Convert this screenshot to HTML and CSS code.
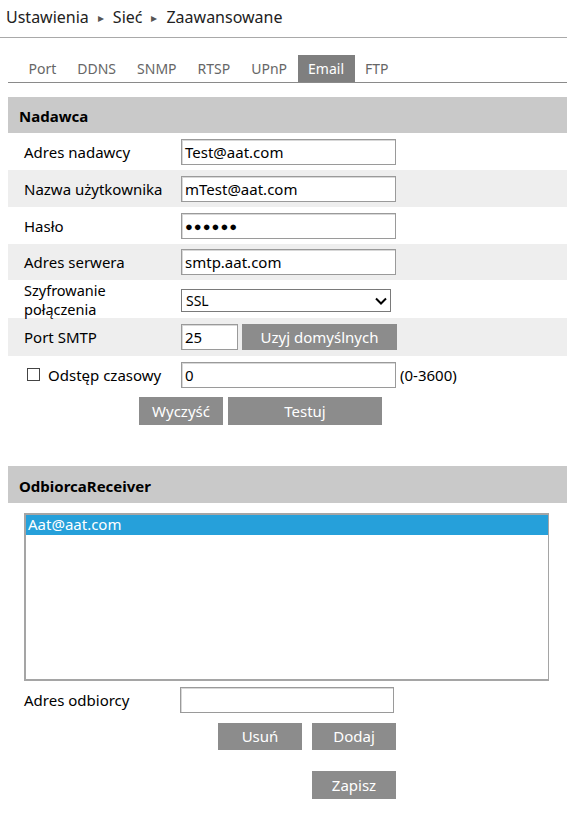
FILE: index.html
```html
<!DOCTYPE html>
<html lang="pl">
<head>
<meta charset="utf-8">
<title>Email</title>
<link rel="stylesheet" href="styles.css">
</head>
<body>
<div class="crumb">Ustawienia<span class="arr">&#9656;</span>Sieć<span class="arr">&#9656;</span>Zaawansowane</div>
<div class="tabs">
  <span class="tab">Port</span>
  <span class="tab">DDNS</span>
  <span class="tab">SNMP</span>
  <span class="tab">RTSP</span>
  <span class="tab">UPnP</span>
  <span class="tab active">Email</span>
  <span class="tab">FTP</span>
</div>

<div class="sec-head">Nadawca</div>
<div class="rows">
  <div class="row h37"><div class="lbl">Adres nadawcy</div><div class="field w215">Test@aat.com</div></div>
  <div class="row h37 alt"><div class="lbl">Nazwa użytkownika</div><div class="field w215">mTest@aat.com</div></div>
  <div class="row h37"><div class="lbl">Hasło</div><div class="field w215 pwd">●●●●●●</div></div>
  <div class="row h36 alt"><div class="lbl">Adres serwera</div><div class="field w215">smtp.aat.com</div></div>
  <div class="row h38"><div class="lbl two"><div>Szyfrowanie</div><div>połączenia</div></div>
    <div class="select"><span>SSL</span>
      <svg class="chev" width="12" height="8" viewBox="0 0 12 8"><path d="M1 1.5 L6 6.5 L11 1.5" fill="none" stroke="#000" stroke-width="2"/></svg>
    </div>
  </div>
  <div class="row h38 alt"><div class="lbl">Port SMTP</div><div class="field w57">25</div><div class="btn btn-def">Uzyj domyślnych</div></div>
  <div class="row h37"><div class="lbl chk-lbl"><span class="chk"></span>Odstęp czasowy</div><div class="field w215">0</div><span class="hint">(0-3600)</span></div>
</div>
<div class="actions1">
  <div class="btn b84">Wyczyść</div>
  <div class="btn b154">Testuj</div>
</div>

<div class="sec-head sec2">OdbiorcaReceiver</div>
<div class="listbox">
  <div class="opt sel">Aat@aat.com</div>
</div>
<div class="rcv-row"><div class="lbl2">Adres odbiorcy</div><div class="field w214"></div></div>
<div class="actions2">
  <div class="btn b84">Usuń</div>
  <div class="btn b84">Dodaj</div>
</div>
<div class="actions3">
  <div class="btn b84">Zapisz</div>
</div>
</body>
</html>
```

FILE: styles.css
```css
* { box-sizing: border-box; }
body {
  margin: 0;
  font-family: "Noto Sans", "Open Sans", sans-serif;
  font-size: 15px;
  color: #000;
  background: #fff;
}
.crumb {
  height: 38px;
  border-bottom: 1px solid #a9a9a9;
  padding: 0 6px;
  font-size: 16px;
  line-height: 34px;
  color: #222;
  white-space: nowrap;
}
.arr {
  display: inline-block;
  font-size: 12px;
  color: #555;
  vertical-align: 1px;
  margin: 0 9px 0 9px;
}
.tabs {
  margin: 17px 0 0 8px;
  height: 28px;
  border-bottom: 1px solid #8a8a8a;
  display: flex;
  padding-left: 10px;
}
.tab {
  height: 27px;
  line-height: 27px;
  padding: 0 10.5px 0 10.5px;
  font-size: 14px;
  color: #666;
}
.tab.active { background: #7f7f7f; color: #fff; }
.sec-head {
  margin: 14px 0 0 8px;
  height: 36px;
  background: #c9c9c9;
  font-weight: bold;
  font-size: 15px;
  line-height: 36px;
  padding: 3px 0 0 11px;
  line-height: 33px;
}
.rows { margin-left: 8px; }
.row { display: flex; align-items: center; }
.row.alt { background: #eeeeee; }
.h36 { height: 36px; }
.h37 { height: 37px; }
.h38 { height: 38px; }
.lbl { width: 173px; padding-left: 16px; flex: none; }
.lbl.two { font-size: 14.5px; line-height: 19px; margin-top: 1px; }
.chk-lbl { display: flex; align-items: center; padding-left: 19px; }
.chk {
  width: 13px; height: 13px;
  border: 1px solid #444;
  background: #fff;
  margin-right: 8px;
  flex: none;
}
.field {
  height: 26px;
  border: 1px solid #9a9a9a;
  box-shadow: inset 1px 1px 0 #d8d8d8;
  background: #fff;
  padding-left: 3px;
  line-height: 24px;
  font-size: 15px;
  white-space: nowrap;
  flex: none;
}
.w215 { width: 215px; }
.w214 { width: 214px; }
.w57 { width: 57px; }
.pwd { font-size: 13px; letter-spacing: 1px; }
.select {
  position: relative;
  width: 210px;
  height: 23px;
  border: 1px solid #7a7a7a;
  background: #fff;
  padding-left: 4px;
  line-height: 21px;
  font-size: 14px;
  margin-top: 2px;
}
.chev { position: absolute; right: 3px; top: 7px; }
.btn {
  background: #8c8c8c;
  color: #fff;
  text-align: center;
  font-size: 15px;
  flex: none;
}
.btn-def { width: 155px; height: 26px; line-height: 26px; margin-left: 4px; }
.hint { margin-left: 4px; }
.actions1 { display: flex; gap: 5px; margin: 4px 0 0 139px; }
.actions1 .btn { height: 28px; line-height: 28px; }
.b84 { width: 84px; }
.b154 { width: 154px; }
.sec2 { margin-top: 41px; height: 37px; padding-top: 3px; line-height: 34px; }
.listbox {
  margin: 10px 0 0 24px;
  width: 525px;
  height: 168px;
  border: 2px solid #a5a5a5;
  border-right-width: 1px;
  background: #fff;
}
.opt { height: 20px; line-height: 19px; padding-left: 2px; font-size: 15px; }
.opt.sel { background: #26a0da; color: #fff; }
.rcv-row { display: flex; align-items: center; margin-top: 6px; }
.lbl2 { width: 180px; padding-left: 24px; flex: none; }
.actions2 { display: flex; gap: 10px; margin: 10px 0 0 218px; }
.actions2 .btn { height: 27px; line-height: 27px; }
.actions3 { display: flex; margin: 21px 0 0 312px; }
.actions3 .btn { height: 28px; line-height: 28px; }
```
